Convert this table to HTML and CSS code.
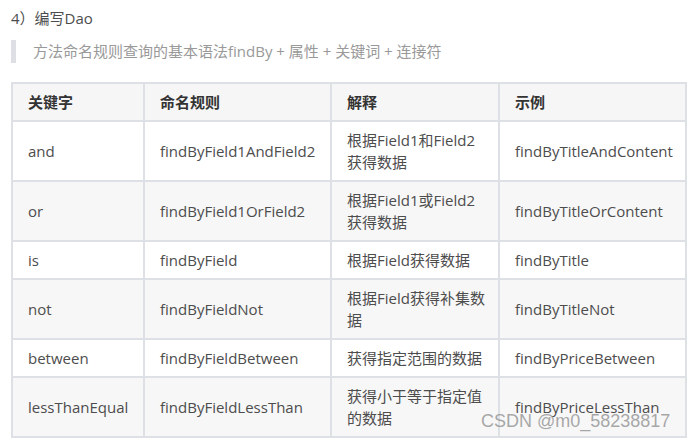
FILE: index.html
```html
<!DOCTYPE html>
<html lang="zh">
<head>
<meta charset="utf-8">
<link rel="stylesheet" href="styles.css">
</head>
<body>
<div class="page">
  <p class="title">4）编写Dao</p>
  <blockquote class="note">方法命名规则查询的基本语法findBy + 属性 + 关键词 + 连接符</blockquote>
  <table class="rules">
    <colgroup>
      <col class="c1"><col class="c2"><col class="c3"><col class="c4">
    </colgroup>
    <thead>
      <tr><th>关键字</th><th>命名规则</th><th>解释</th><th>示例</th></tr>
    </thead>
    <tbody>
      <tr><td>and</td><td>findByField1AndField2</td><td>根据Field1和Field2<br>获得数据</td><td>findByTitleAndContent</td></tr>
      <tr><td>or</td><td>findByField1OrField2</td><td>根据Field1或Field2<br>获得数据</td><td>findByTitleOrContent</td></tr>
      <tr><td>is</td><td>findByField</td><td>根据Field获得数据</td><td>findByTitle</td></tr>
      <tr><td>not</td><td>findByFieldNot</td><td>根据Field获得补集数<br>据</td><td>findByTitleNot</td></tr>
      <tr><td>between</td><td>findByFieldBetween</td><td>获得指定范围的数据</td><td>findByPriceBetween</td></tr>
      <tr><td>lessThanEqual</td><td>findByFieldLessThan</td><td>获得小于等于指定值<br>的数据</td><td>findByPriceLessThan</td></tr>
    </tbody>
  </table>
  <div class="watermark">CSDN @m0_58238817</div>
</div>
</body>
</html>
```
FILE: styles.css
```css
html, body {
  margin: 0;
  padding: 0;
  background: #ffffff;
}
.page {
  position: relative;
  padding: 6px 0 0 11px;
  font-family: "Open Sans", "Noto Sans CJK SC", sans-serif;
  font-size: 15px;
  color: #4d4d4d;
  height: 442px;
  box-sizing: border-box;
}
.title {
  margin: 0;
  line-height: 24px;
  color: #4d4d4d;
}
.note {
  margin: 10px 0 0 0;
  padding: 0 0 0 17px;
  border-left: 5px solid #dddfe4;
  line-height: 23px;
  color: #999999;
  font-size: 15px;
}
.rules {
  margin-top: 19px;
  border-collapse: collapse;
  width: 674px;
  table-layout: fixed;
  border: 2px solid #dde1e6;
}
.c1 { width: 132px; }
.c2 { width: 187px; }
.c3 { width: 168px; }
.c4 { width: 187px; }
.rules th, .rules td {
  border: 2px solid #dde1e6;
  padding: 7px 15px;
  line-height: 22px;
  text-align: left;
  vertical-align: middle;
  white-space: nowrap;
}
.rules th {
  font-weight: bold;
  color: #333333;
  background: #f6f6f6;
}
.rules td {
  color: #4d4d4d;
}
.rules tbody tr:nth-child(odd) { background: #ffffff; }
.rules tbody tr:nth-child(even) { background: #f7f7f7; }
.watermark {
  position: absolute;
  left: 481px;
  top: 411px;
  white-space: nowrap;
  font-family: "Liberation Sans", sans-serif;
  font-size: 18px;
  color: rgba(140, 140, 140, 0.75);
}
```
